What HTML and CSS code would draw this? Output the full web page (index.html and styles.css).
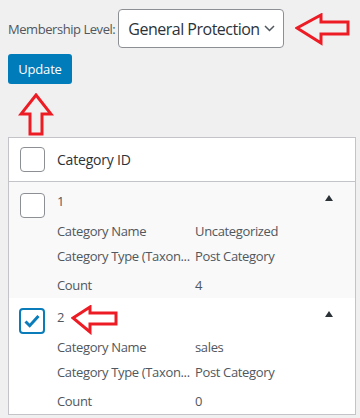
FILE: index.html
```html
<!DOCTYPE html>
<html lang="en">
<head>
    <meta charset="UTF-8">
    <meta name="viewport" content="width=device-width, initial-scale=1.0">
    <title>Membership Categories</title>
    <link rel="stylesheet" href="styles.css">
</head>
<body>

    <div class="wrap">
        <!-- level picker -->
        <div class="toolbar">
            <label class="level-label">Membership Level:</label>
            <div class="select">
                <span>General Protection</span>
                <svg class="chevron" width="11" height="7" viewBox="0 0 11 7"><path d="M1 1l4.5 4.5L10 1" fill="none" stroke="#50575e" stroke-width="1.5"/></svg>
            </div>
        </div>

        <button class="btn-primary">Update</button>

        <!-- category table -->
        <div class="table">
            <div class="thead">
                <span class="check"></span>
                <span class="th-title">Category ID</span>
            </div>

            <div class="row alt">
                <div class="check-cell"><span class="check"></span></div>
                <div class="cells">
                    <div class="primary">1</div>
                    <div class="detail"><span class="name">Category Name</span><span class="value">Uncategorized</span></div>
                    <div class="detail"><span class="name" title="Category Type (Taxonomy)">Category Type (Taxon...</span><span class="value">Post Category</span></div>
                    <div class="detail last"><span class="name">Count</span><span class="value">4</span></div>
                </div>
                <span class="toggle"></span>
            </div>

            <div class="row">
                <div class="check-cell">
                    <span class="check checked">
                        <svg width="18" height="16" viewBox="0 0 18 16"><path d="M2.5 8.5l4.2 4.2L15.5 3" fill="none" stroke="#0a7cba" stroke-width="3"/></svg>
                    </span>
                </div>
                <div class="cells">
                    <div class="primary">2</div>
                    <div class="detail"><span class="name">Category Name</span><span class="value">sales</span></div>
                    <div class="detail"><span class="name" title="Category Type (Taxonomy)">Category Type (Taxon...</span><span class="value">Post Category</span></div>
                    <div class="detail last"><span class="name">Count</span><span class="value">0</span></div>
                </div>
                <span class="toggle"></span>
            </div>
        </div>
    </div>

    <!-- red annotation arrows -->
    <svg class="arrow arrow-select" width="58" height="34" viewBox="0 0 58 34">
        <polygon points="2,15 26,2 26,9 53,9 53,21 26,21 26,30" fill="none" stroke="#ed1c24" stroke-width="3" stroke-linejoin="miter"/>
    </svg>
    <svg class="arrow arrow-update" width="36" height="44" viewBox="0 0 36 44">
        <polygon points="18,2 33,21 24,21 24,41 12,41 12,21 3,21" fill="none" stroke="#ed1c24" stroke-width="3"/>
    </svg>
    <svg class="arrow arrow-row" width="50" height="30" viewBox="0 0 50 30">
        <polygon points="2,13 19,2 19,8 45,8 45,19 19,19 19,27" fill="none" stroke="#ed1c24" stroke-width="3"/>
    </svg>

</body>
</html>
```

FILE: styles.css
```css
* {
    margin: 0;
    padding: 0;
    box-sizing: border-box;
}

body {
    background: #f0f0f1;
    font-family: 'Open Sans', 'Noto Sans', sans-serif;
    font-size: 13px;
    color: #3c434a;
    position: relative;
    height: 418px;
    overflow: hidden;
}

.wrap {
    padding: 9px 4px 0 8px;
}

/* 會員等級 */
.toolbar {
    display: flex;
    align-items: center;
    gap: 3px;
}

.level-label {
    color: #50575e;
    letter-spacing: -0.45px;
}

.select {
    width: 166px;
    height: 39px;
    background: #fff;
    border: 1px solid #8c8f94;
    border-radius: 4px;
    display: flex;
    align-items: center;
    justify-content: space-between;
    padding: 0 8px 0 9px;
    font-size: 16px;
    color: #2c3338;
    letter-spacing: -0.5px;
}

.btn-primary {
    margin-top: 6px;
    width: 64px;
    height: 30px;
    background: #007cba;
    color: #fff;
    border: none;
    border-radius: 3px;
    font-family: inherit;
    font-size: 13px;
    letter-spacing: -0.2px;
    display: block;
}

/* 表格 */
.table {
    margin-top: 53px;
    width: 348px;
    background: #fff;
    border: 1px solid #c3c4c7;
}

.thead {
    height: 44px;
    display: flex;
    align-items: center;
    padding-left: 11px;
    border-bottom: 1px solid #c3c4c7;
    font-size: 14px;
    color: #2c3338;
}

.th-title {
    margin-left: 12px;
    letter-spacing: -0.2px;
}

.check {
    width: 25px;
    height: 25px;
    border: 1px solid #8c8f94;
    border-radius: 4px;
    background: #fff;
    display: flex;
    align-items: center;
    justify-content: center;
    flex-shrink: 0;
}

.check.checked {
    border: 2px solid #0a7cba;
    width: 26px;
    height: 26px;
}

.row {
    display: flex;
    position: relative;
    height: 116px;
}

.row.alt {
    background: #f9f9f9;
}

.check-cell {
    width: 48px;
    padding: 11px 0 0 11px;
}

.row:not(.alt) .check-cell {
    padding: 10px 0 0 10px;
}

.cells {
    padding-top: 10px;
    color: #50575e;
}

.primary {
    height: 18px;
    line-height: 18px;
    margin-bottom: 12px;
}

.detail {
    display: flex;
    height: 18px;
    line-height: 18px;
    margin-bottom: 7px;
}

.detail.last {
    margin-top: 11px;
}

.name {
    width: 138px;
    white-space: nowrap;
    padding-right: 3px;
    letter-spacing: -0.35px;
}

.value {
    letter-spacing: -0.35px;
}

/* 展開箭頭 */
.toggle {
    position: absolute;
    right: 22px;
    top: 13px;
    width: 0;
    height: 0;
    border-left: 4.5px solid transparent;
    border-right: 4.5px solid transparent;
    border-bottom: 6px solid #2c3338;
}

.arrow {
    position: absolute;
}

.arrow-select {
    left: 295px;
    top: 13px;
}

.arrow-update {
    left: 18px;
    top: 93px;
}

.arrow-row {
    left: 71px;
    top: 305px;
}
```
